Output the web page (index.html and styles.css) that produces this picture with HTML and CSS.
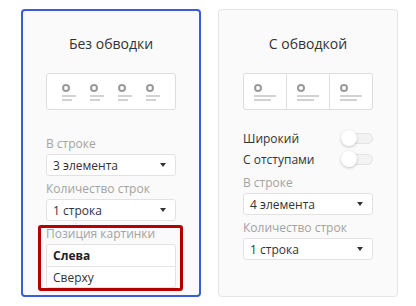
FILE: index.html
```html
<!DOCTYPE html>
<html lang="ru">
<head>
<meta charset="utf-8">
<link rel="stylesheet" href="styles.css">
</head>
<body>
<div class="cards">
  <div class="card card--active">
    <div class="title">Без обводки</div>
    <div class="preview preview--plain">
      <div class="item"><span class="dot"></span><span class="ln ln1"></span><span class="ln ln2"></span></div>
      <div class="item"><span class="dot"></span><span class="ln ln1"></span><span class="ln ln2"></span></div>
      <div class="item"><span class="dot"></span><span class="ln ln1"></span><span class="ln ln2"></span></div>
      <div class="item"><span class="dot"></span><span class="ln ln1"></span><span class="ln ln2"></span></div>
    </div>
    <div class="field field--first">
      <div class="label">В строке</div>
      <div class="select"><span>3 элемента</span><span class="arrow"></span></div>
    </div>
    <div class="field">
      <div class="label">Количество строк</div>
      <div class="select"><span>1 строка</span><span class="arrow"></span></div>
    </div>
    <div class="field highlight">
      <div class="label">Позиция картинки</div>
      <div class="list">
        <div class="opt opt--selected">Слева</div>
        <div class="opt">Сверху</div>
      </div>
    </div>
  </div>
  <div class="card">
    <div class="title">С обводкой</div>
    <div class="preview preview--boxed">
      <div class="cell"><div class="item item--wide"><span class="dot"></span><span class="ln ln1"></span><span class="ln ln2"></span></div></div>
      <div class="cell"><div class="item item--wide"><span class="dot"></span><span class="ln ln1"></span><span class="ln ln2"></span></div></div>
      <div class="cell"><div class="item item--wide"><span class="dot"></span><span class="ln ln1"></span><span class="ln ln2"></span></div></div>
    </div>
    <div class="toggles">
      <div class="toggle-row"><span>Широкий</span><span class="switch"><span class="knob"></span></span></div>
      <div class="toggle-row"><span>С отступами</span><span class="switch"><span class="knob"></span></span></div>
    </div>
    <div class="field field--after-toggles">
      <div class="label">В строке</div>
      <div class="select"><span>4 элемента</span><span class="arrow"></span></div>
    </div>
    <div class="field">
      <div class="label">Количество строк</div>
      <div class="select"><span>1 строка</span><span class="arrow"></span></div>
    </div>
  </div>
</div>
</body>
</html>
```
FILE: styles.css
```css
* { box-sizing: border-box; }
html, body { margin: 0; background: #ffffff; }
body {
  font-family: "Open Sans", "DejaVu Sans", sans-serif;
  color: #333333;
}
.cards {
  display: flex;
  gap: 17px;
  padding: 9px 0 0 21px;
}
.card {
  width: 180px;
  height: 288px;
  background: #fafafa;
  border: 1px solid #e4e4e4;
  border-radius: 4px;
  padding: 25px 24px 0 24px;
}
.card--active {
  border: 2px solid #3b5cd9;
  padding: 24px 23px 0 23px;
}
.title {
  font-size: 14px;
  line-height: 18px;
  text-align: center;
  color: #333333;
}
.preview {
  margin-top: 20px;
  height: 37px;
  background: #ffffff;
  border: 1px solid #dedede;
  border-radius: 3px;
  display: flex;
}
.preview--plain {
  align-items: center;
  justify-content: space-between;
  padding: 0 15px;
}
.cell {
  flex: 1;
  display: flex;
  align-items: center;
  padding-left: 10px;
}
.cell + .cell { border-left: 1px solid #e0e0e0; }
.item {
  width: 14px;
  display: flex;
  flex-direction: column;
  align-items: flex-start;
  margin-top: 1px;
}
.item--wide { width: 22px; }
.dot {
  width: 8px;
  height: 8px;
  border: 2px solid #9a9a9a;
  border-radius: 50%;
}
.ln {
  height: 2px;
  background: #d2d2d2;
}
.ln1 { width: 100%; margin-top: 3px; }
.ln2 { width: 72%; margin-top: 2px; }
.item--wide .ln2 { width: 77%; }
.field--first { margin-top: 26px; }
.field { margin-top: 5px; }
.field--first { margin-top: 26px; }
.field--after-toggles { margin-top: 5px; }
.label {
  font-size: 12px;
  line-height: 16px;
  color: #a3a3a3;
  margin-bottom: 2px;
}
.select {
  height: 22px;
  background: #ffffff;
  border: 1px solid #e2e2e2;
  border-radius: 3px;
  display: flex;
  align-items: center;
  justify-content: space-between;
  padding: 0 9px 0 6px;
  font-size: 12px;
  color: #333333;
}
.arrow {
  width: 0;
  height: 0;
  border-left: 3px solid transparent;
  border-right: 3px solid transparent;
  border-top: 4px solid #333333;
}
.highlight { position: relative; }
.highlight::after {
  content: "";
  position: absolute;
  left: -8px;
  right: -7px;
  top: -1px;
  bottom: -3px;
  border: 3px solid #b50000;
  border-radius: 3px;
}
.list {
  background: #ffffff;
  border: 1px solid #e2e2e2;
  border-radius: 3px;
}
.opt {
  height: 21px;
  display: flex;
  align-items: center;
  padding-left: 6px;
  font-size: 12px;
  color: #333333;
}
.opt + .opt { border-top: 1px solid #e4e4e4; }
.opt--selected { font-weight: 700; color: #222222; }
.toggles { margin-top: 18px; }
.toggle-row {
  height: 21px;
  display: flex;
  align-items: center;
  justify-content: space-between;
  font-size: 12px;
  color: #333333;
}
.switch {
  position: relative;
  width: 32px;
  height: 11px;
  background: #f3f3f3;
  border: 1px solid #e4e4e4;
  border-radius: 6px;
}
.knob {
  position: absolute;
  left: -1px;
  top: -4px;
  width: 16px;
  height: 16px;
  background: #ffffff;
  border-radius: 50%;
  box-shadow: 0 1px 3px rgba(0,0,0,0.22);
}
```
